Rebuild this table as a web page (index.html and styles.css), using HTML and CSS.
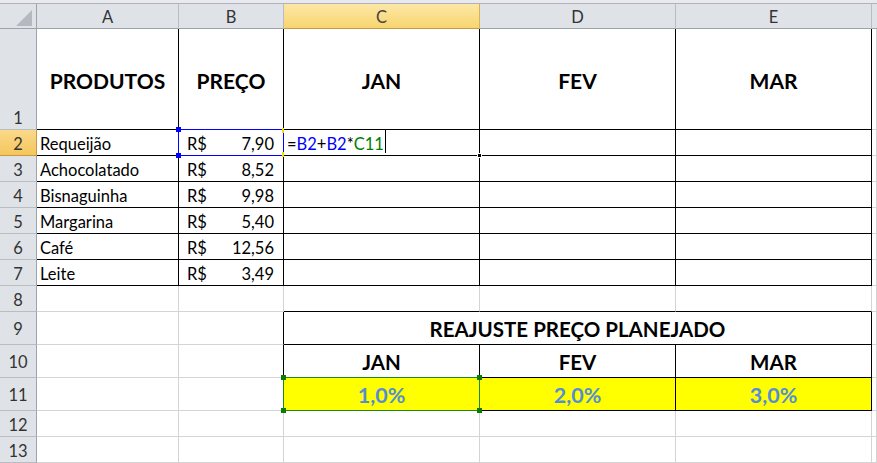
FILE: index.html
```html
<!DOCTYPE html>
<html lang="pt-BR">
<head>
<meta charset="utf-8">
<title>Planilha</title>
<link rel="stylesheet" href="styles.css">
</head>
<body>
<div class="sheet">
  <div class="strip"></div>
  <div class="grid">
    <!-- header row -->
    <div class="corner"><svg width="36" height="25" viewBox="0 0 36 25"><polygon points="32,6 32,22 16,22" fill="#b4b8bf"/></svg></div>
    <div class="ch">A</div>
    <div class="ch">B</div>
    <div class="ch sel">C</div>
    <div class="ch">D</div>
    <div class="ch">E</div>
    <div class="ch last"></div>

    <!-- row 1 -->
    <div class="rh bot">1</div>
    <div class="c t h1">PRODUTOS</div>
    <div class="c t h1">PREÇO</div>
    <div class="c t h1">JAN</div>
    <div class="c t h1">FEV</div>
    <div class="c t h1">MAR</div>
    <div class="c"></div>

    <!-- row 2 -->
    <div class="rh sel">2</div>
    <div class="c t txt">Requeijão</div>
    <div class="c t money"><span>R$</span><span>7,90</span></div>
    <div class="c t txt formula"><span class="k">=</span><span class="ref-b">B2</span><span class="k">+</span><span class="ref-b">B2</span><span class="k">*</span><span class="ref-g">C11</span><span class="caret"></span></div>
    <div class="c t"></div>
    <div class="c t"></div>
    <div class="c"></div>

    <!-- row 3 -->
    <div class="rh">3</div>
    <div class="c t txt">Achocolatado</div>
    <div class="c t money"><span>R$</span><span>8,52</span></div>
    <div class="c t"></div>
    <div class="c t"></div>
    <div class="c t"></div>
    <div class="c"></div>

    <!-- row 4 -->
    <div class="rh">4</div>
    <div class="c t txt">Bisnaguinha</div>
    <div class="c t money"><span>R$</span><span>9,98</span></div>
    <div class="c t"></div>
    <div class="c t"></div>
    <div class="c t"></div>
    <div class="c"></div>

    <!-- row 5 -->
    <div class="rh">5</div>
    <div class="c t txt">Margarina</div>
    <div class="c t money"><span>R$</span><span>5,40</span></div>
    <div class="c t"></div>
    <div class="c t"></div>
    <div class="c t"></div>
    <div class="c"></div>

    <!-- row 6 -->
    <div class="rh">6</div>
    <div class="c t txt">Café</div>
    <div class="c t money"><span>R$</span><span>12,56</span></div>
    <div class="c t"></div>
    <div class="c t"></div>
    <div class="c t"></div>
    <div class="c"></div>

    <!-- row 7 -->
    <div class="rh">7</div>
    <div class="c t txt">Leite</div>
    <div class="c t money"><span>R$</span><span>3,49</span></div>
    <div class="c t"></div>
    <div class="c t"></div>
    <div class="c t"></div>
    <div class="c"></div>

    <!-- row 8 -->
    <div class="rh">8</div>
    <div class="c"></div>
    <div class="c"></div>
    <div class="c bk-b"></div>
    <div class="c bk-b"></div>
    <div class="c bk-b"></div>
    <div class="c"></div>

    <!-- row 9 -->
    <div class="rh mid">9</div>
    <div class="c"></div>
    <div class="c bk-r"></div>
    <div class="c t h2 merge">REAJUSTE PREÇO PLANEJADO</div>
    <div class="c"></div>

    <!-- row 10 -->
    <div class="rh mid">10</div>
    <div class="c"></div>
    <div class="c bk-r"></div>
    <div class="c t h2">JAN</div>
    <div class="c t h2">FEV</div>
    <div class="c t h2">MAR</div>
    <div class="c"></div>

    <!-- row 11 -->
    <div class="rh mid">11</div>
    <div class="c"></div>
    <div class="c bk-r"></div>
    <div class="c t h2 pct">1,0%</div>
    <div class="c t h2 pct">2,0%</div>
    <div class="c t h2 pct">3,0%</div>
    <div class="c"></div>

    <!-- row 12 -->
    <div class="rh">12</div>
    <div class="c"></div>
    <div class="c"></div>
    <div class="c"></div>
    <div class="c"></div>
    <div class="c"></div>
    <div class="c"></div>

    <!-- row 13 -->
    <div class="rh">13</div>
    <div class="c"></div>
    <div class="c"></div>
    <div class="c"></div>
    <div class="c"></div>
    <div class="c"></div>
    <div class="c"></div>
  </div>

  <!-- reference highlight for B2 -->
  <div class="hl-blue"></div>
  <div class="sq blue sq-b1"></div>
  <div class="sq blue sq-b2"></div>
  <div class="ymark ym1"></div>
  <div class="ymark ym2"></div>
  <!-- fill handle of active cell -->
  <div class="fill-handle"></div>
  <!-- reference highlight for C11 -->
  <div class="hl-green"></div>
  <div class="sq green sq-g1"></div>
  <div class="sq green sq-g2"></div>
  <div class="sq green sq-g3"></div>
  <div class="sq green sq-g4"></div>
</div>
</body>
</html>
```

FILE: styles.css
```css
* { box-sizing: border-box; }

html, body {
  margin: 0;
  padding: 0;
  background: #ffffff;
  overflow: hidden;
}

.sheet {
  position: relative;
  width: 877px;
  height: 463px;
  font-family: Lato, "Liberation Sans", sans-serif;
  font-size: 16.5px;
  color: #000;
}

.strip {
  height: 3px;
  background: #e9e9ef;
}

.grid {
  display: grid;
  grid-template-columns: 37px 142px 105px 196px 196px 196px 1fr;
  grid-template-rows: 26px 101px repeat(7, 26px) repeat(3, 33px) 26px 26px;
}

.corner {
  background: #dfe3e8;
  border-top: 1px solid #aeb3bb;
  border-right: 1px solid #9da3aa;
  border-bottom: 1px solid #9da3aa;
  display: flex;
  align-items: flex-start;
}

.ch {
  background: #dfe3e8;
  border-top: 1px solid #aeb3bb;
  border-right: 1px solid #b8bcc3;
  border-bottom: 1px solid #9da3aa;
  display: flex;
  align-items: center;
  justify-content: center;
  padding-top: 2px;
  color: #333;
  font-size: 16.5px;
}

.ch.last { border-right: none; }

.ch.sel {
  background: linear-gradient(#fce7a6, #f8d56f);
  border-right-color: #d7b160;
  border-bottom-color: #c69a45;
  color: #444;
}

.rh {
  background: #dfe3e8;
  border-right: 1px solid #9da3aa;
  border-bottom: 1px solid #b8bcc3;
  display: flex;
  justify-content: center;
  align-items: flex-end;
  padding-bottom: 1px;
  line-height: 20px;
  color: #333;
  font-size: 16.5px;
}

.rh.mid { align-items: center; padding-bottom: 0; padding-top: 2px; }

.rh.sel {
  background: linear-gradient(#f9d98a, #f5c65c);
  border-bottom-color: #c69a45;
  border-right-color: #c69a45;
}

.c {
  border-right: 1px solid #d4d4d4;
  border-bottom: 1px solid #d4d4d4;
  min-width: 0;
  overflow: visible;
  white-space: nowrap;
}

.t {
  border-right-color: #000;
  border-bottom-color: #000;
}

.bk-b { border-bottom-color: #000; }
.bk-r { border-right-color: #000; }

.txt {
  display: flex;
  align-items: flex-end;
  padding: 0 0 1px 3px;
  line-height: 20px;
}

.money {
  display: flex;
  align-items: flex-end;
  justify-content: space-between;
  padding: 0 9px 1px 8px;
  line-height: 20px;
}

.h1 {
  display: flex;
  align-items: center;
  justify-content: center;
  font-weight: 700;
  font-size: 21px;
  padding-top: 3px;
}

.h2 {
  display: flex;
  align-items: center;
  justify-content: center;
  font-weight: 700;
  font-size: 20.5px;
  padding-top: 1px;
}

.merge { grid-column: span 3; }

.pct {
  background: #ffff00;
  color: #558ed5;
  font-size: 21.5px;
}

.formula { padding-left: 3px; }
.k { color: #000; }
.ref-b { color: #0000ff; }
.ref-g { color: #008000; }

.caret {
  display: inline-block;
  width: 1px;
  height: 23px;
  background: #000;
  margin-left: 1px;
  align-self: flex-start;
  margin-top: 0;
}

/* overlays */
.hl-blue {
  position: absolute;
  left: 178px;
  top: 129px;
  width: 106px;
  height: 27px;
  border: 1px solid #0000ff;
}

.hl-green {
  position: absolute;
  left: 283px;
  top: 377px;
  width: 197px;
  height: 34px;
  border: 1px solid #1a8a1a;
}

.sq {
  position: absolute;
  width: 5px;
  height: 5px;
}

.sq.blue { background: #0000ff; }
.sq.green { background: #0b7a0b; }

.sq-b1 { left: 176px; top: 127px; }
.sq-b2 { left: 176px; top: 153px; }

.ymark {
  position: absolute;
  width: 2px;
  height: 5px;
  background: #f0e000;
}
.ym1 { left: 282px; top: 128px; }
.ym2 { left: 282px; top: 152px; }

.sq-g1 { left: 281px; top: 375px; }
.sq-g2 { left: 477px; top: 375px; }
.sq-g3 { left: 281px; top: 408px; }
.sq-g4 { left: 477px; top: 408px; }

.fill-handle {
  position: absolute;
  left: 477px;
  top: 153px;
  width: 5px;
  height: 5px;
  background: #000;
  border: 1px solid #fff;
}
```
